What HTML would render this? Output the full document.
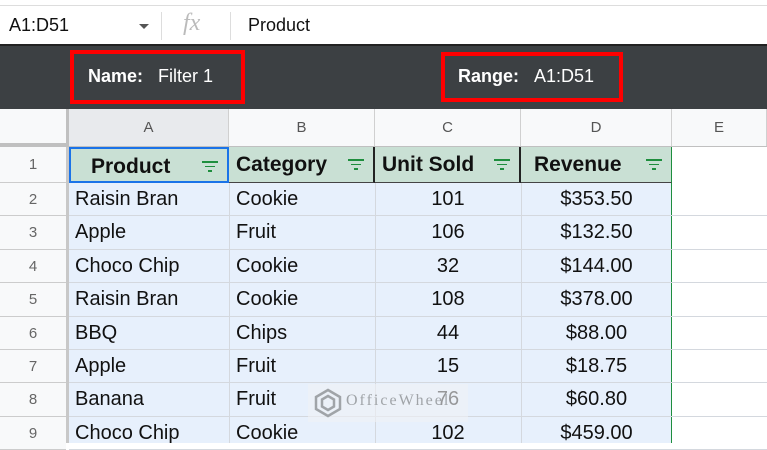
<!DOCTYPE html>
<html><head><style>
*{margin:0;padding:0;box-sizing:border-box}
body{width:767px;height:443px;overflow:hidden;background:#fff;font-family:"Liberation Sans",Arial,sans-serif;position:relative}
.a{position:absolute}
.t{position:absolute;font-size:20px;color:#111;white-space:nowrap}
.ch{position:absolute;top:109px;height:38px;background:#f8f9fa;border-right:1px solid #d0d0d0;color:#555;font-size:15px;text-align:center;line-height:38px}
.rh{position:absolute;left:0;width:66px;background:#f8f9fa;color:#666;font-size:15px;text-align:center;border-bottom:1px solid #ccc}
.hc{position:absolute;top:147px;height:36px;background:#c9e0d4;font-weight:bold;font-size:21px;line-height:36px;color:#111;border-right:2px solid #222;border-bottom:1px solid #444}
.f{position:absolute;right:8px;top:12px;width:18px}
.f i{display:block;height:1.5px;background:#1e8e3e;margin:0 auto 3px}
</style></head><body>
<div class="a" style="left:0;top:0;width:767px;height:6px;background:#fff;border-bottom:1px solid #ddd"></div>
<div class="t" style="left:9px;top:15px;font-size:18px">A1:D51</div>
<div class="a" style="left:139px;top:24px;border-left:5px solid transparent;border-right:5px solid transparent;border-top:5px solid #555"></div>
<div class="a" style="left:161px;top:12px;width:1px;height:28px;background:#ddd"></div>
<div class="t" style="left:183px;top:10px;font-size:24px;color:#bbb;font-family:'Liberation Serif',serif;font-style:italic">fx</div>
<div class="a" style="left:230px;top:12px;width:1px;height:28px;background:#ddd"></div>
<div class="t" style="left:248px;top:15px;font-size:18px">Product</div>
<div class="a" style="left:0;top:44px;width:767px;height:65px;background:#3c4043;border-top:2px solid #222"></div>
<div class="a" style="left:70px;top:50px;width:175px;height:54px;border:4px solid #f00"></div>
<div class="t" style="left:88px;top:66px;font-size:18px;color:#fff;font-weight:bold">Name:&nbsp;&nbsp; <span style="font-weight:normal">Filter 1</span></div>
<div class="a" style="left:441px;top:52px;width:182px;height:50px;border:4px solid #f00"></div>
<div class="t" style="left:458px;top:66px;font-size:18px;color:#fff;font-weight:bold">Range:&nbsp;&nbsp; <span style="font-weight:normal">A1:D51</span></div>
<div class="a" style="left:0;top:109px;width:70px;height:38px;background:#f8f9fa;border-right:4px solid #c0c0c0;border-bottom:4px solid #c0c0c0"></div>
<div class="ch" style="left:69px;width:160px;background:#e8eaed">A</div>
<div class="ch" style="left:229px;width:146px">B</div>
<div class="ch" style="left:375px;width:146px">C</div>
<div class="ch" style="left:521px;width:151px">D</div>
<div class="ch" style="left:672px;width:95px">E</div>
<div class="a" style="left:0;top:146px;width:767px;height:1px;background:#c0c0c0"></div>
<div class="a" style="left:66px;top:147px;width:3px;height:296px;background:#c8c8c8"></div>
<div class="rh" style="top:147px;height:36px;line-height:36px">1</div>
<div class="hc" style="left:69px;width:160px;border:2px solid #1a73e8;padding-left:20px">Product<div class="f"><i style="width:16px"></i><i style="width:10px"></i><i style="width:4px"></i></div></div>
<div class="hc" style="left:229px;width:146px;padding-left:7px">Category<div class="f"><i style="width:16px"></i><i style="width:10px"></i><i style="width:4px"></i></div></div>
<div class="hc" style="left:375px;width:146px;padding-left:7px">Unit Sold<div class="f"><i style="width:16px"></i><i style="width:10px"></i><i style="width:4px"></i></div></div>
<div class="hc" style="left:521px;width:151px;padding-left:13px;border-right:1px solid #1e8e3e">Revenue<div class="f"><i style="width:16px"></i><i style="width:10px"></i><i style="width:4px"></i></div></div>
<div class="a" style="left:69px;top:183px;width:603px;height:260px;background:#e7f0fc;border-right:1px solid #1e8e3e"></div>
<div id="rows"></div>
<script>
var d=[["Raisin Bran","Cookie","101","$353.50"],["Apple","Fruit","106","$132.50"],["Choco Chip","Cookie","32","$144.00"],["Raisin Bran","Cookie","108","$378.00"],["BBQ","Chips","44","$88.00"],["Apple","Fruit","15","$18.75"],["Banana","Fruit","76","$60.80"],["Choco Chip","Cookie","102","$459.00"]];
var h="";
for(var i=0;i<8;i++){var y=183+i*33.4;
h+='<div class="rh" style="top:'+y+'px;height:33.4px;line-height:33px">'+(i+2)+'</div>';
h+='<div class="a" style="left:69px;top:'+(y+32.4)+'px;width:698px;height:1px;background:#d4d8de"></div>';
h+='<div class="t" style="left:75px;top:'+(y+5)+'px">'+d[i][0]+'</div>';
h+='<div class="t" style="left:236px;top:'+(y+5)+'px">'+d[i][1]+'</div>';
h+='<div class="t" style="left:375px;width:146px;text-align:center;top:'+(y+5)+'px">'+d[i][2]+'</div>';
h+='<div class="t" style="left:521px;width:151px;text-align:center;top:'+(y+5)+'px">'+d[i][3]+'</div>';}
[229,375,521].forEach(function(x){h+='<div class="a" style="left:'+x+'px;top:183px;width:1px;height:260px;background:#d4d8de"></div>'});
document.getElementById("rows").innerHTML=h;
</script>
<div class="a" style="left:308px;top:384px;width:160px;height:38px;background:rgba(240,242,245,0.6)"></div>
<svg class="a" style="left:313px;top:388px" width="30" height="30" viewBox="0 0 30 30"><path d="M15 2 L27 9 V21 L15 28 L3 21 V9 Z M15 8 L21 11.5 V18.5 L15 22 L9 18.5 V11.5 Z" fill="none" stroke="#a0a4a8" stroke-width="2.5"/></svg>
<div class="t" style="left:346px;top:392px;font-size:16px;color:#a0a4a8;font-family:'Liberation Serif',serif;letter-spacing:2px">OfficeWheel</div>
</body></html>
